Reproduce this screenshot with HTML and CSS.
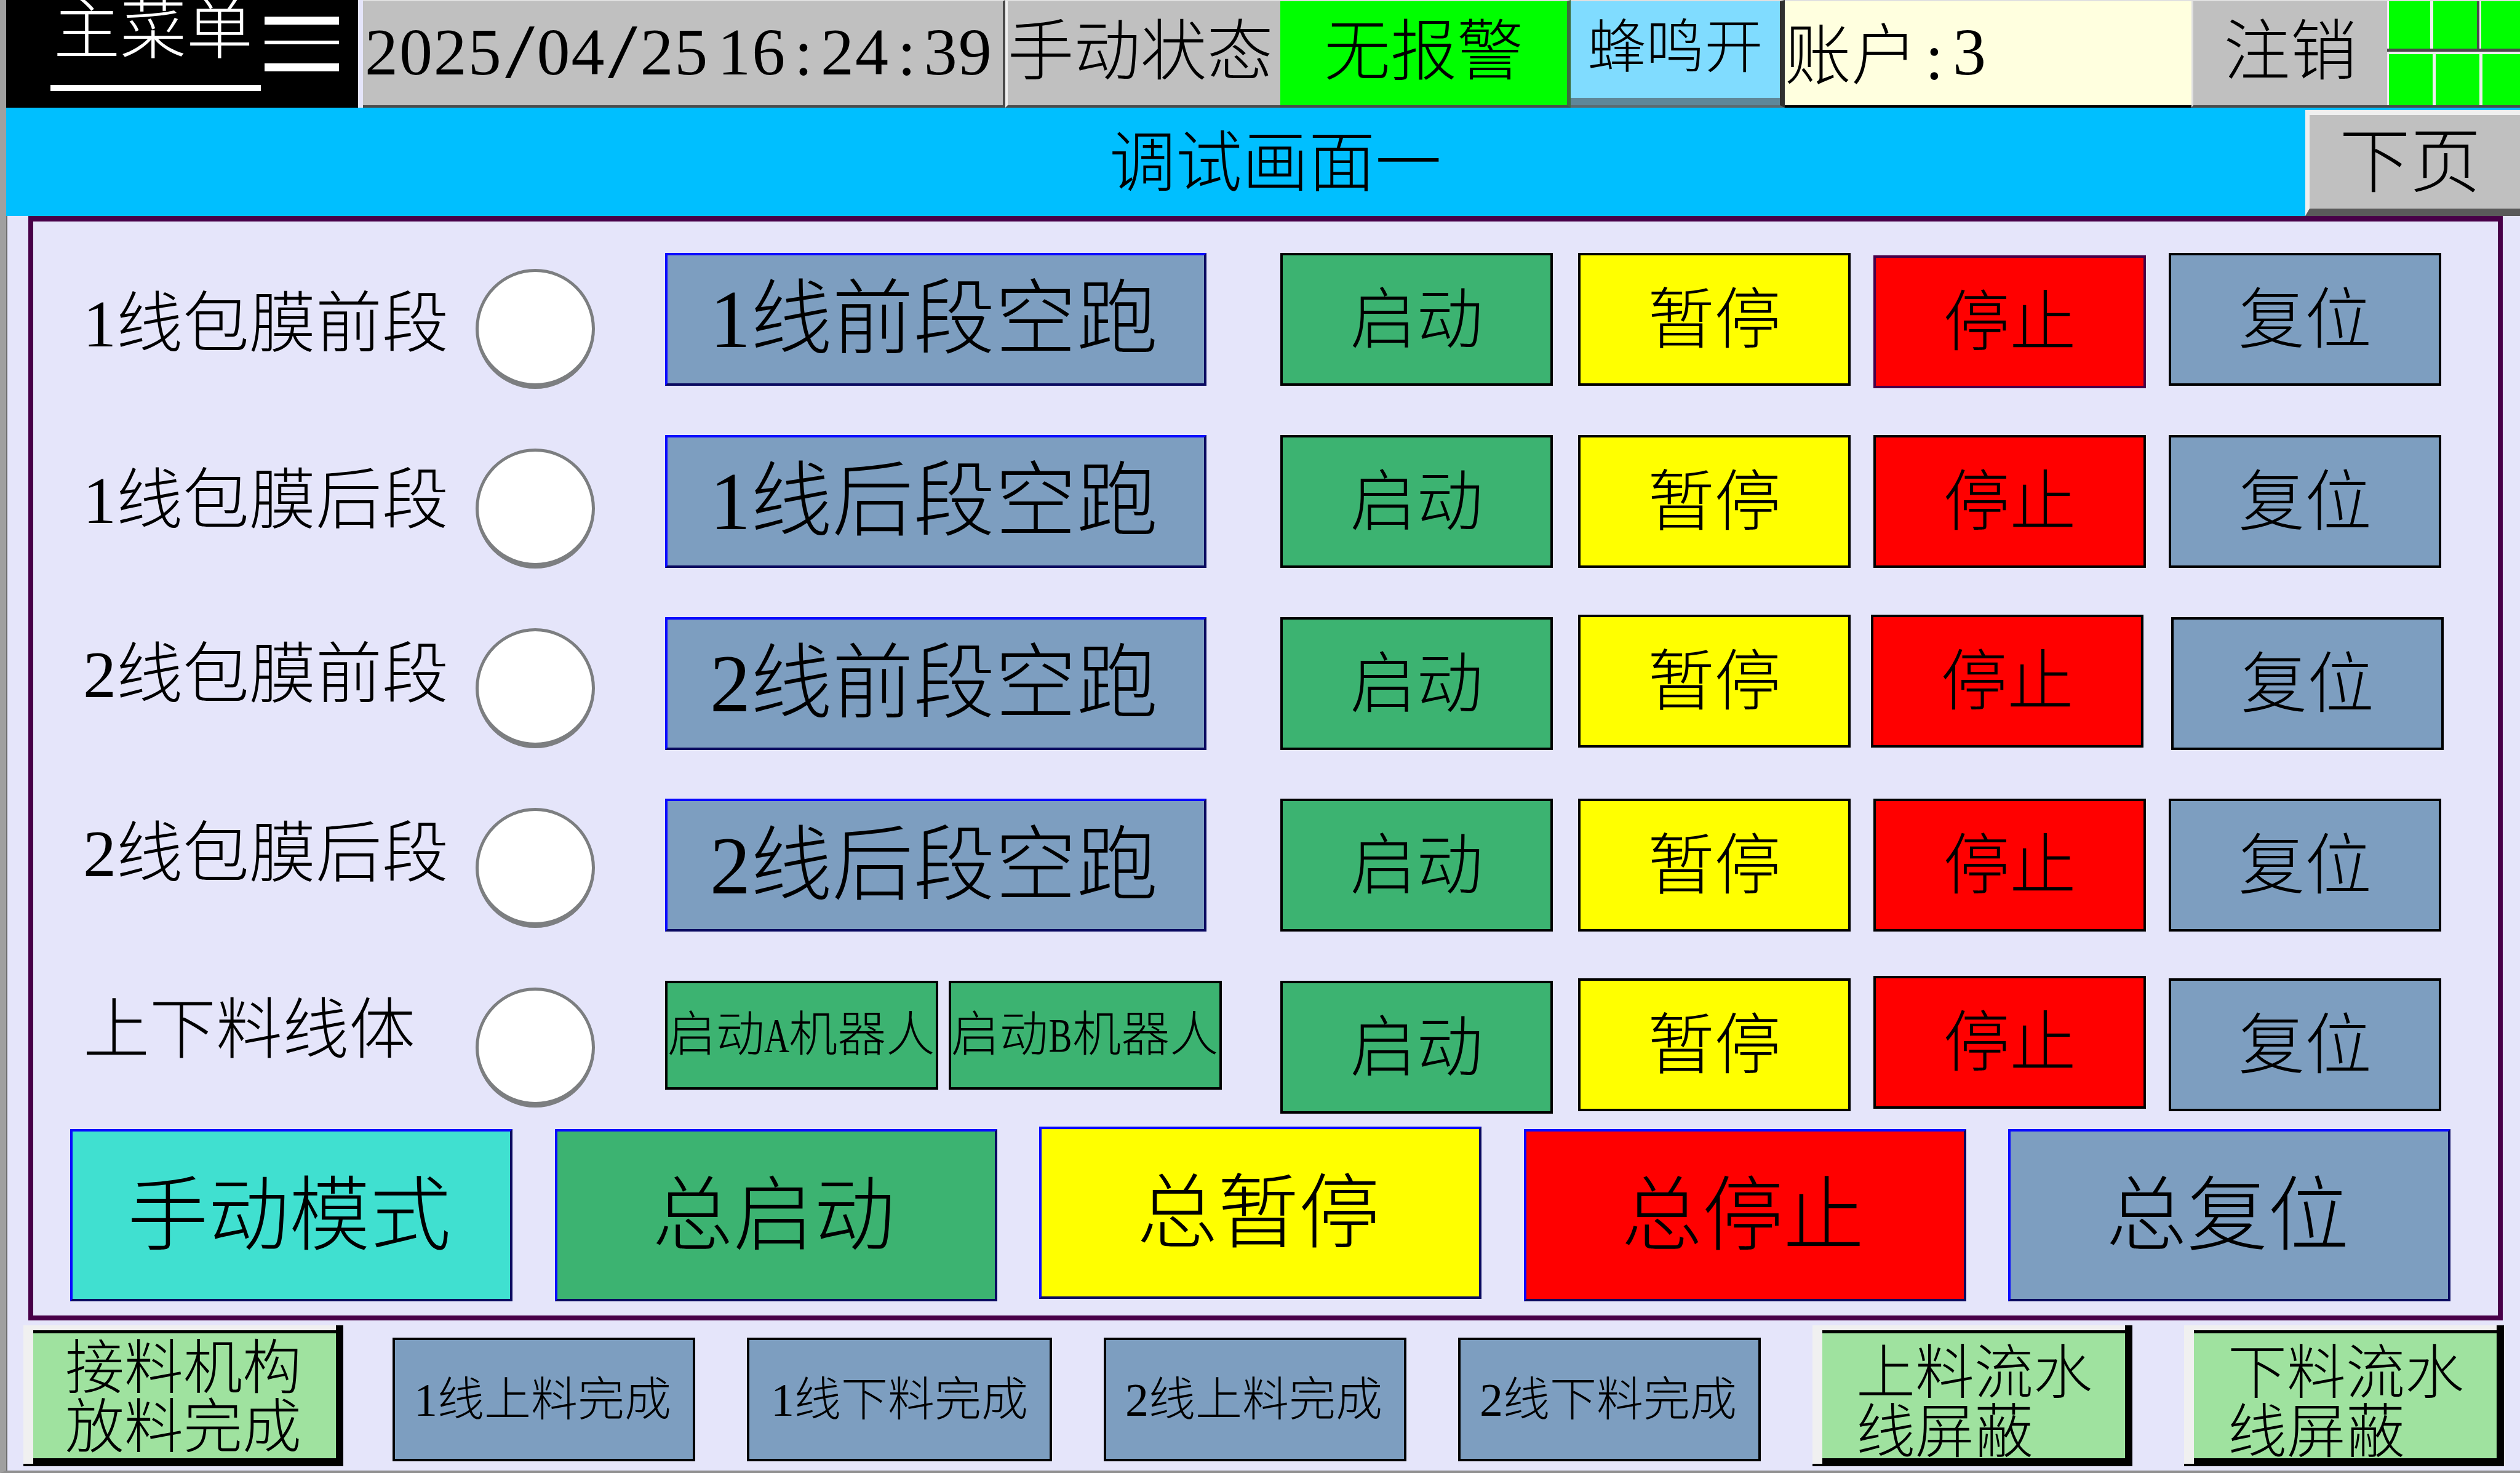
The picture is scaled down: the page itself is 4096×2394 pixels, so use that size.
FILE: index.html
```html
<!DOCTYPE html>
<html lang="zh-CN">
<head>
    <meta charset="UTF-8">
    <meta name="viewport" content="width=device-width, initial-scale=1.0">
    <title>调试画面一</title>
    <link rel="stylesheet" href="styles.css">
</head>
<body>
    <div class="screen">
        <header class="topbar">
            <div class="menu">
                <div class="menu-label">主菜单</div>
                <div class="menu-icon"><i></i><i class="thin"></i><i></i></div>
            </div>
            <div class="cell datetime">
                <span>2025<b class="h slash"><em>/</em></b>04<b class="h slash"><em>/</em></b>25</span>
                <span>16<b class="h">:</b>24<b class="h">:</b>39</span>
            </div>
            <div class="cell mode">手动状态</div>
            <div class="cell alarm">无报警</div>
            <div class="cell buzzer">蜂鸣开</div>
            <div class="cell account"><span class="account-label">账户<b class="h">:</b></span><span>3</span></div>
            <div class="cell logout">注销</div>
            <div class="lights">
                <div class="lights-row"><i></i><i class="wide"></i><i></i></div>
                <div class="lights-row bottom"><i></i><i></i><i></i></div>
            </div>
        </header>

        <div class="titlebar">
            <h1>调试画面一</h1>
            <button class="next">下页</button>
        </div>

        <main class="panel">
            <div class="lines">
                <div class="col labels">
                    <div class="label">1线包膜前段</div>
                    <div class="label">1线包膜后段</div>
                    <div class="label up">2线包膜前段</div>
                    <div class="label">2线包膜后段</div>
                    <div class="label">上下料线体</div>
                </div>
                <div class="col leds">
                    <div class="led"></div>
                    <div class="led"></div>
                    <div class="led"></div>
                    <div class="led"></div>
                    <div class="led"></div>
                </div>
                <div class="col dry">
                    <button class="btn blue big-text edge">1线前段空跑</button>
                    <button class="btn blue big-text edge">1线后段空跑</button>
                    <button class="btn blue big-text edge">2线前段空跑</button>
                    <button class="btn blue big-text edge">2线后段空跑</button>
                    <div class="robots">
                        <button class="btn green">启动<b class="h"><em>A</em></b>机器人</button>
                        <button class="btn green">启动<b class="h"><em>B</em></b>机器人</button>
                    </div>
                </div>
                <div class="col ops start">
                    <button class="btn green">启动</button>
                    <button class="btn green">启动</button>
                    <button class="btn green">启动</button>
                    <button class="btn green">启动</button>
                    <button class="btn green">启动</button>
                </div>
                <div class="col ops pause">
                    <button class="btn yellow">暂停</button>
                    <button class="btn yellow">暂停</button>
                    <button class="btn yellow up">暂停</button>
                    <button class="btn yellow">暂停</button>
                    <button class="btn yellow up">暂停</button>
                </div>
                <div class="col ops stop">
                    <button class="btn red down plum">停止</button>
                    <button class="btn red">停止</button>
                    <button class="btn red up left">停止</button>
                    <button class="btn red">停止</button>
                    <button class="btn red up2">停止</button>
                </div>
                <div class="col ops reset">
                    <button class="btn blue">复位</button>
                    <button class="btn blue">复位</button>
                    <button class="btn blue right">复位</button>
                    <button class="btn blue">复位</button>
                    <button class="btn blue up">复位</button>
                </div>
            </div>
            <div class="totals">
                <button class="btn teal edge">手动模式</button>
                <button class="btn green edge">总启动</button>
                <button class="btn yellow edge up">总暂停</button>
                <button class="btn red edge">总停止</button>
                <button class="btn blue edge">总复位</button>
            </div>
        </main>

        <footer class="bottom-bar">
            <button class="raised first">接料机构<br>放料完成</button>
            <button class="btn blue done">1线上料完成</button>
            <button class="btn blue done second">1线下料完成</button>
            <button class="btn blue done">2线上料完成</button>
            <button class="btn blue done">2线下料完成</button>
            <button class="raised shield">上料流水<br>线屏蔽</button>
            <button class="raised shield">下料流水<br>线屏蔽</button>
        </footer>
    </div>
</body>
</html>
```

FILE: styles.css
```css
* { box-sizing: border-box; }
body { margin: 0; background: #e5e5fa; color: #000; font-family: "Liberation Serif", "Noto Sans CJK SC", serif; font-size: 108px; font-weight: 300; line-height: 1; }
button { font: inherit; color: inherit; margin: 0; padding: 0; border-radius: 0; white-space: nowrap; }
h1 { font: inherit; margin: 0; }

/* half-width cell for ascii signs between the ideographs */
.h { display: inline-flex; justify-content: center; width: 0.5em; font-weight: inherit; }
.h em { font-style: normal; transform: scaleX(0.72); }
.slash em { transform: scale(1.6, 1.15); }

.screen { width: 4096px; height: 2394px; overflow: hidden; background: #e5e5fa; border-left: 10px solid #a0a0a0; border-bottom: 4px solid #909090; box-shadow: inset 2px 0 0 #6e6e6e; display: flex; flex-direction: column; }

/* top bar */
.topbar { display: flex; height: 175px; flex: none; }
.menu { width: 572px; flex: none; margin-right: 8px; background: #000; color: #fff; display: flex; }
.menu-label { width: 342px; height: 148px; margin-left: 72px; padding-left: 5px; border-bottom: 10px solid #fff; line-height: 100px; white-space: nowrap; }
.menu-icon { width: 121px; margin-left: 6px; padding-top: 27px; display: flex; flex-direction: column; gap: 26px; }
.menu-icon i { height: 13px; background: #fff; }
.menu-icon .thin { height: 6px; margin-bottom: 5px; }
.cell { height: 175px; flex: none; background: #c0c0c0; border-bottom: 4px solid #4a4a4a; border-top: 2px solid #e0e0e0; display: flex; align-items: center; justify-content: center; padding-bottom: 4px; white-space: nowrap; }
.datetime { width: 1044px; border-right: 4px solid #4a4a4a; justify-content: flex-start; padding-left: 3px; gap: 14px; letter-spacing: 1.9px; }
.datetime .h { width: 56px; letter-spacing: 0; }
.mode { width: 447px; border-left: 4px solid #f0f0f0; padding-right: 12px; }
.alarm { background: #00ff00; width: 472px; border-right: 6px solid #3c6e3c; }
.buzzer { background: #80dcff; width: 348px; border-right: 8px solid #303030; font-size: 95px; box-shadow: inset 0 -12px 0 #5f8799; border-bottom-color: #5c6a70; padding-bottom: 16px; }
.account { background: #ffffdf; width: 661px; border-bottom-color: #000; justify-content: flex-start; gap: 3px; }
.account-label { margin-top: 14px; }
.logout { width: 318px; border-left: 3px solid #e0e0e0; }
.lights { flex: 1; min-width: 0; overflow: hidden; height: 175px; background: #eee; border-bottom: 4px solid #4a4a4a; border-top: 2px solid #e0e0e0; display: flex; flex-direction: column; }
.lights-row { display: flex; height: 82px; border-bottom: 5px solid #4a4a4a; padding-left: 3px; gap: 5px; }
.lights-row i { width: 67px; flex: none; background: #00ff00; }
.lights-row .wide { width: 75px; border-right: 4px solid #4a4a4a; margin-right: -2px; }
.lights-row.bottom { height: auto; flex: 1; border-bottom: 0; margin-top: 4px; }
.lights-row.bottom i { width: 71px; }

/* title */
.titlebar { background: #00bfff; height: 176px; flex: none; display: flex; padding-top: 4px; }
.titlebar h1 { width: 3737px; padding-left: 389px; text-align: center; line-height: 173px; }
.next { background: #c0c0c0; flex: 1; border: solid; border-width: 8px 0 12px 7px; border-color: #f0f0f0 #c0c0c0 #5a5a5a #f0f0f0; font-size: 115px; padding: 3px 15px 0 0; }

/* main panel */
.panel { width: 4022px; height: 1795px; flex: none; margin-left: 36px; border: 8px solid #480048; border-top-width: 9px; }
.lines { display: flex; height: 1475px; }
.col { display: flex; flex-direction: column; flex: none; }
.labels { width: 719px; padding: 111px 0 0 81px; gap: 179px; }
.label { height: 108px; line-height: 112px; white-space: nowrap; }
.leds { width: 308px; padding-top: 77px; gap: 97px; }
.led { width: 194px; height: 195px; border-radius: 50%; background: #fff; border: 5px solid #7c7e80; border-bottom-width: 9px; }
.dry { width: 1000px; padding-top: 51px; gap: 79.75px; }
.btn { border: 4px solid #000; display: flex; align-items: center; justify-content: center; flex: none; height: 216px; }
.btn.edge { border-color: #0a0aff #0a0a60 #0a0a60 #0a0aff; }
.dry > .btn { width: 880px; padding: 3px 6px 0 0; }
.big-text { font-size: 132.5px; }
.robots { display: flex; gap: 17px; }
.robots .btn { width: 444px; height: 177px; font-size: 79px; padding-right: 2px; }
.ops { padding-top: 51px; gap: 79.75px; }
.ops .btn { width: 443px; padding-top: 4px; }
.start { width: 484px; }
.pause { width: 480px; }
.stop { width: 480px; }
.green { background: #3cb371; }
.yellow { background: #ffff00; }
.red { background: #ff0000; }
.blue { background: #7d9ec0; }
.teal { background: #40e0d0; }
.plum { border-color: #480048; }
.up { margin-top: -4px; margin-bottom: 4px; }
.up2 { margin-top: -8px; margin-bottom: 8px; }
.down { margin-top: 4px; margin-bottom: -4px; }
.left { margin-left: -4px; }
.right { margin-left: 4px; }

.totals { display: flex; gap: 68.6px; padding-left: 60px; font-size: 131.5px; }
.totals .btn { width: 719px; height: 280px; padding: 3px 7px 0 0; }

/* bottom bar */
.bottom-bar { display: flex; padding: 8px 0 0 28px; font-size: 76px; }
.done { width: 492px; height: 201px; margin: 20px 0 0 84px; padding-right: 4px; }
.first + .done { margin-left: 80px; }
.done.second { width: 496px; padding-right: 0; }
.raised { width: 520px; height: 229px; flex: none; border: 0; text-align: left; font-size: 96px; line-height: 96px; padding: 6px 0 0 68px; background: linear-gradient(#000, #000) right / 12px 100% no-repeat, linear-gradient(#000, #000) 0 100% / 100% 4px no-repeat, linear-gradient(#000, #000) 16px 100% / 100% 13px no-repeat, linear-gradient(#000, #000) 16px 8px / 100% 5px no-repeat, linear-gradient(#f0f0f0, #f0f0f0) 0 0 / 16px 100% no-repeat, linear-gradient(#f0f0f0, #f0f0f0) 0 0 / 100% 8px no-repeat, #9fe29f; }
.shield { margin-left: 84px; padding-top: 22px; padding-left: 71px; }
```
